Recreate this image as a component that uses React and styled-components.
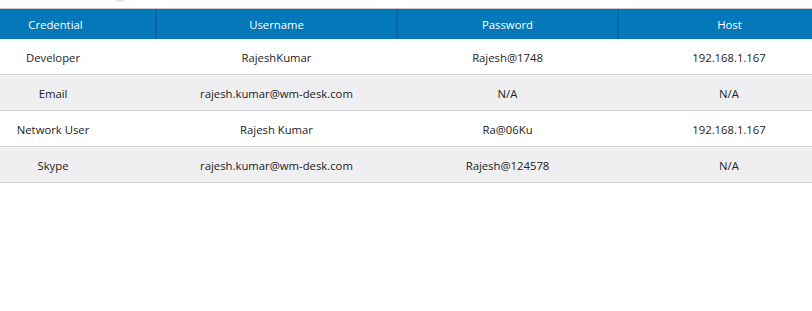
import React from "react";
import styled, { createGlobalStyle } from "styled-components";

const GlobalStyle = createGlobalStyle`
  html, body {
    margin: 0;
    padding: 0;
    background: #ffffff;
    overflow: hidden;
  }
  body {
    font-family: "Open Sans", "Noto Sans", Arial, sans-serif;
  }
`;

const Page = styled.div`
  width: 812px;
  height: 311px;
  overflow: hidden;
  background: #ffffff;
`;

const TopStrip = styled.div`
  height: 8px;
  border-bottom: 1px solid #c9c9c9;
  position: relative;
  overflow: hidden;
`;

const Knob = styled.div`
  position: absolute;
  left: 112px;
  top: -14px;
  width: 16px;
  height: 16px;
  border-radius: 50%;
  background: #e3e3e3;
`;

const Table = styled.table`
  width: 840px;
  border-collapse: collapse;
  table-layout: fixed;
  font-size: 11.3px;
`;

const HeadCell = styled.th`
  box-sizing: border-box;
  height: 30px;
  padding: 0 ${(p) => (p.$first ? "44px" : "0")} 0 0;
  background: #0478b8;
  color: #ffffff;
  font-weight: 400;
  text-align: center;
  border-right: ${(p) => (p.$last ? "none" : "2px solid #0466a4")};
`;

const Row = styled.tr`
  background: ${(p) => (p.$alt ? "#efeff1" : "#ffffff")};
  border-bottom: 1px solid #d2d2d2;
`;

const Cell = styled.td`
  height: 34px;
  padding: 1px ${(p) => (p.$first ? "50px" : "0")} 0 0;
  color: #222222;
  text-align: center;
  white-space: nowrap;
`;

const columns = [
  { key: "credential", label: "Credential", width: 156 },
  { key: "username", label: "Username", width: 241 },
  { key: "password", label: "Password", width: 221 },
  { key: "host", label: "Host", width: 222 },
];

const rows = [
  { credential: "Developer", username: "RajeshKumar", password: "Rajesh@1748", host: "192.168.1.167" },
  { credential: "Email", username: "rajesh.kumar@wm-desk.com", password: "N/A", host: "N/A" },
  { credential: "Network User", username: "Rajesh Kumar", password: "Ra@06Ku", host: "192.168.1.167" },
  { credential: "Skype", username: "rajesh.kumar@wm-desk.com", password: "Rajesh@124578", host: "N/A" },
];

const App = () => {
  return (
    <>
      <GlobalStyle />
      <Page>
        <TopStrip>
          <Knob />
        </TopStrip>
        <Table>
          <colgroup>
            {columns.map((c) => (
              <col key={c.key} style={{ width: c.width }} />
            ))}
          </colgroup>
          <thead>
            <tr>
              {columns.map((c, i) => (
                <HeadCell key={c.key} $first={i === 0} $last={i === columns.length - 1}>
                  {c.label}
                </HeadCell>
              ))}
            </tr>
          </thead>
          <tbody>
            {rows.map((r, idx) => (
              <Row key={r.credential} $alt={idx % 2 === 1}>
                {columns.map((c, i) => (
                  <Cell key={c.key} $first={i === 0}>
                    {r[c.key]}
                  </Cell>
                ))}
              </Row>
            ))}
          </tbody>
        </Table>
      </Page>
    </>
  );
};

export default App;
